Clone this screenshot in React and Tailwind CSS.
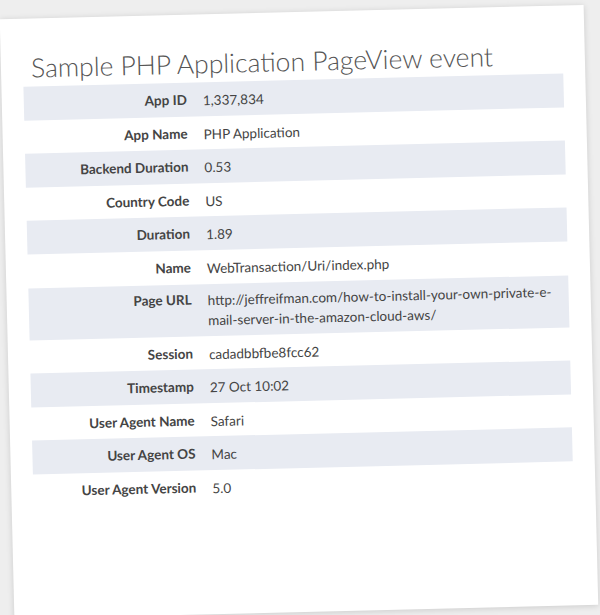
export default function App() {
  const rows = [
    ["App ID", "1,337,834"],
    ["App Name", "PHP Application"],
    ["Backend Duration", "0.53"],
    ["Country Code", "US"],
    ["Duration", "1.89"],
    ["Name", "WebTransaction/Uri/index.php"],
    ["Page URL", "http://jeffreifman.com/how-to-install-your-own-private-e-mail-server-in-the-amazon-cloud-aws/"],
    ["Session", "cadadbbfbe8fcc62"],
    ["Timestamp", "27 Oct 10:02"],
    ["User Agent Name", "Safari"],
    ["User Agent OS", "Mac"],
    ["User Agent Version", "5.0"],
  ];
  return (
    <div className="w-[600px] h-[615px] bg-[#eeeeee] overflow-hidden" style={{ fontFamily: "Lato, 'Open Sans', sans-serif" }}>
      <div className="ml-[7px] mt-[12px] w-[584px] h-[600px] bg-white shadow-[0_1px_6px_rgba(0,0,0,0.15)] rotate-[-1.4deg] origin-center pt-[33px] px-[22px]">
        <h1 className="text-[26.5px] font-light text-[#555] ml-[8px] leading-[32px]">Sample PHP Application PageView event</h1>
        <div className="mt-[3px]">
          {rows.map(([k, v], i) => (
            <div key={k} className={`flex ${i % 2 === 0 ? "bg-[#e8ebf2]" : ""} ${k === "Page URL" ? "py-[6px]" : "py-[8px] h-[33.6px]"}`}>
              <div className="w-[163px] text-right font-bold text-[13.5px] text-[#444] leading-[18px]">{k}</div>
              <div className="ml-[16px] w-[350px] text-[13.5px] text-[#444] leading-[20px] break-words">{v}</div>
            </div>
          ))}
        </div>
      </div>
    </div>
  );
}
